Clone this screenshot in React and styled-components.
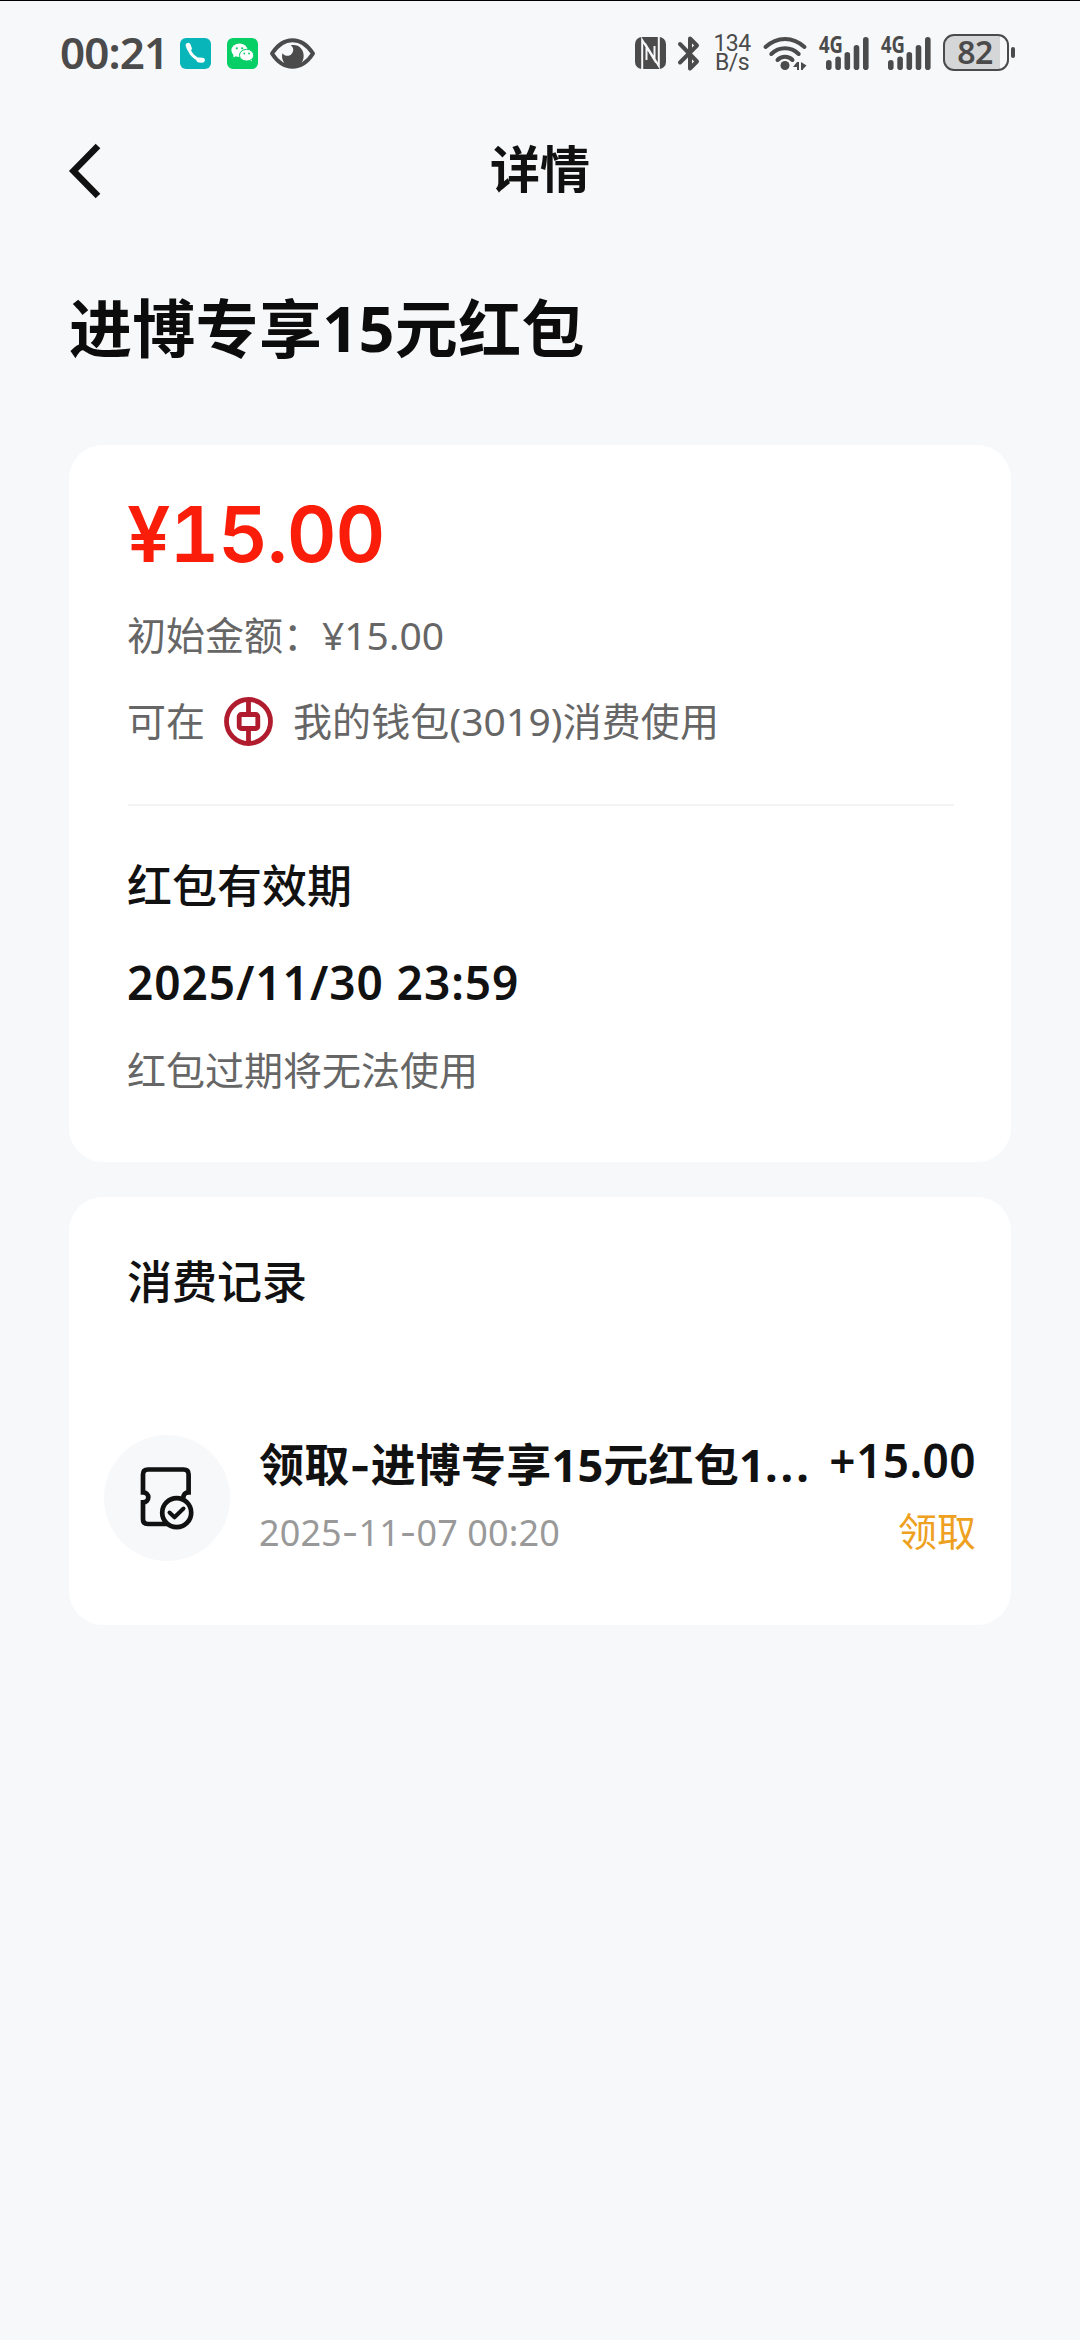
// libraries
import React from "react";
import { createGlobalStyle, styled } from "styled-components";

const GlobalStyle = createGlobalStyle`
  * {
    box-sizing: border-box;
  }

  body {
    margin: 0;
    background-color: #f7f8fa;
  }
`;

const Page = styled.div`
  width: 1080px;
  height: 2340px;
  display: flex;
  flex-direction: column;
  border-top: 1px solid #000;
  background-color: #f7f8fa;
  color: #111;
  font-family: "Noto Sans", "Noto Sans CJK SC", sans-serif;
  white-space: nowrap;
  overflow: hidden;
`;

const StatusBar = styled.div`
  height: 104px;
  padding: 0 65px 0 60px;
  display: flex;
  align-items: center;
  justify-content: space-between;
  color: #4b4b4b;
`;

const StatusGroup = styled.div`
  display: flex;
  align-items: center;
`;

const Icon = styled.svg`
  display: block;
  flex: none;
  margin-left: ${(props) => props.$gap || 0}px;
  overflow: visible;
`;

const Time = styled.div`
  width: 104px;
  margin-bottom: 3px;
  font-size: 44px;
  font-weight: 600;
  line-height: 60px;
  letter-spacing: -0.9px;
`;

const AppBadge = styled.div`
  width: 31px;
  height: 31px;
  margin-left: 16px;
  display: flex;
  align-items: center;
  justify-content: center;
  border-radius: 6px;
  background-color: ${(props) => props.$color};
`;

const Speed = styled.div`
  width: 38px;
  margin-left: 13px;
  font-family: Roboto, sans-serif;
  font-size: 23px;
  font-weight: 400;
  line-height: 19.5px;
  text-align: center;
  letter-spacing: -0.6px;
`;

const BatteryWrap = styled.div`
  margin-left: 12px;
  display: flex;
  align-items: center;
  gap: 2px;
`;

const BatteryBody = styled.div`
  width: 66px;
  height: 37px;
  margin-bottom: 2px;
  padding-right: 2px;
  border: 2.5px solid #4b4b4b;
  border-radius: 11px;
  background: linear-gradient(to right, #d5d6d7 88%, #f7f8fa 88%);
  font-size: 32px;
  font-weight: 600;
  line-height: 31px;
  text-align: center;
  letter-spacing: -0.6px;
`;

const BatteryCap = styled.div`
  width: 4px;
  height: 11px;
  margin-bottom: 2px;
  border-radius: 2px;
  background-color: #4b4b4b;
`;

const Nav = styled.div`
  height: 128px;
  padding: 0 69px;
  display: grid;
  grid-template-columns: 1fr auto 1fr;
  align-items: center;
`;

const NavTitle = styled.div`
  font-size: 50px;
  font-weight: 700;
  line-height: 60px;
`;

const Heading = styled.h1`
  margin: 53px 69px 75px;
  font-size: 63px;
  font-weight: 700;
  line-height: 84px;
  letter-spacing: 0.3px;
  color: #0c0c0c;
`;

const Card = styled.section`
  height: ${(props) => props.$height}px;
  margin: 0 69px 35px;
  padding-top: ${(props) => props.$top}px;
  border-radius: 34px;
  background-color: #fff;
`;

const CardBody = styled.div`
  padding: 0 57px 0 58px;
`;

const Amount = styled.div`
  font-family: Inter, "Noto Sans CJK SC", sans-serif;
  font-size: 77px;
  font-weight: 600;
  font-variant-numeric: tabular-nums;
  line-height: 90px;
  letter-spacing: -1px;
  color: #fa1e0a;
`;

const Info = styled.div`
  display: flex;
  align-items: center;
  margin-top: ${(props) => props.$top}px;
  font-size: 39px;
  line-height: 54px;
  height: 54px;
  color: #666;
`;

const Divider = styled.div`
  height: 2px;
  margin: 56px 0 50px 1px;
  background-color: #f3f3f4;
`;

const SectionTitle = styled.div`
  font-size: 45px;
  font-weight: 500;
  line-height: 60px;
`;

const Deadline = styled.div`
  margin-top: 36px;
  font-size: 46px;
  font-weight: 600;
  line-height: 60px;
  letter-spacing: 0.95px;
`;

const Record = styled.div`
  margin-top: 123px;
  padding: 0 35px;
  display: flex;
`;

const RecordIcon = styled.div`
  width: 126px;
  height: 126px;
  margin-right: 29px;
  padding: 32px 0 0 36px;
  border-radius: 50%;
  background-color: #f7f8fa;
`;

const RecordText = styled.div`
  flex: 1;
`;

const RecordTitle = styled.div`
  font-size: 45px;
  font-weight: 700;
  line-height: 60px;
  letter-spacing: 0.2px;
`;

// the hyphen of Inter is longer than that of Noto Sans
const Hyphen = styled.span`
  font-family: Inter, sans-serif;
  line-height: 1;
`;

const Dots = styled.span`
  letter-spacing: 3px;
`;

const RecordTime = styled.div`
  margin-top: 13px;
  font-size: 36px;
  line-height: 50px;
  letter-spacing: 0.1px;
  color: #999;
`;

const RecordRight = styled.div`
  margin-top: -5px;
  text-align: right;
`;

const RecordAmount = styled.div`
  font-size: 46px;
  font-weight: 600;
  line-height: 60px;
  letter-spacing: 0.4px;
`;

const RecordType = styled.div`
  margin-top: 14px;
  font-size: 39px;
  line-height: 54px;
  color: #eea020;
`;

const PhoneIcon = () => (
  <Icon width="21" height="21" viewBox="0 0 21 21">
    <path
      d="M3.5 2.5C3.5 9.5 9.6 16.6 17.6 17.4"
      fill="none"
      stroke="#fff"
      strokeWidth="3"
    />
    <path
      d="M3.2 2.4L4.3 5.4M14 17L17.4 17.2"
      stroke="#fff"
      strokeWidth="5"
      strokeLinecap="round"
    />
  </Icon>
);

const WechatIcon = () => (
  <Icon width="23" height="20" viewBox="0 0 23 20">
    <path d="M2 9.5L2.6 14.6L7 12Z" fill="#fff" />
    <ellipse cx="8.5" cy="7.2" rx="8.1" ry="6.8" fill="#fff" />
    <path d="M17 15L20.5 18.6L21 13Z" fill="#fff" />
    <ellipse
      cx="15.6"
      cy="12.2"
      rx="7.1"
      ry="5.9"
      fill="#fff"
      stroke="#07cf66"
      strokeWidth="1"
    />
    <g fill="#07cf66">
      <circle cx="5.8" cy="5.3" r="1.1" />
      <circle cx="11.2" cy="5.3" r="1.1" />
      <circle cx="13.3" cy="10.5" r="0.9" />
      <circle cx="18" cy="10.5" r="0.9" />
    </g>
  </Icon>
);

const EyeIcon = () => (
  <Icon $gap={12} width="45" height="31" viewBox="0 0 135 92">
    <path
      d="M6 46C22 21 42 6 67.5 6S113 21 129 46C113 71 93 86 67.5 86S22 71 6 46Z"
      fill="none"
      stroke="currentColor"
      strokeWidth="12"
      strokeLinejoin="round"
    />
    <path
      d="M62 22C84 16 101 32 101 53C101 74 86 87 68 87S36 73 36 53C36 50 37 47 38 45C44 55 59 56 66 46C72 37 71 27 62 22Z"
      fill="currentColor"
    />
  </Icon>
);

const NfcIcon = () => (
  <Icon width="31" height="32" viewBox="0 0 31 32">
    <rect width="31" height="32" rx="7" fill="currentColor" />
    <path
      d="M7.2 32V3L19.5 23V9M23.8 0V29L11.5 9V23"
      fill="none"
      stroke="#f7f8fa"
      strokeWidth="2"
    />
  </Icon>
);

const BluetoothIcon = () => (
  <Icon $gap={12} width="22" height="35" viewBox="0 0 22 35">
    <path
      d="M2 8L19 25.5L12 32.5V2.5L19 9.5L2 26.5"
      fill="none"
      stroke="currentColor"
      strokeWidth="4"
      strokeLinecap="round"
      strokeLinejoin="round"
    />
  </Icon>
);

const WifiIcon = () => (
  <Icon $gap={12} width="44" height="35" viewBox="0 0 44 35">
    <path
      d="M2.5 11C14 .2 30 .2 41.5 11M8.3 18C16 10.4 28 10.4 35.7 18M14.5 24C18.5 19.8 25.5 19.8 29.5 24"
      fill="none"
      stroke="currentColor"
      strokeWidth="4"
      strokeLinecap="round"
    />
    <circle cx="22" cy="29.5" r="4.5" fill="currentColor" />
    <path
      d="M30 31L34 26H36V34H34V31ZM38 26L43.5 29.5L40 33V34H38Z"
      fill="currentColor"
    />
  </Icon>
);

const BARS = [
  { x: 7, top: 23 },
  { x: 16.3, top: 19.5 },
  { x: 25.5, top: 15 },
  { x: 34.7, top: 8 },
  { x: 44, top: 0 },
];

const SignalIcon = ({ gap }) => (
  <Icon $gap={gap} width="50" height="33" viewBox="0 0 50 33">
    {BARS.map((bar) => (
      <rect
        key={bar.x}
        x={bar.x}
        y={bar.top}
        width="5.6"
        height={33 - bar.top}
        rx="2.8"
        fill="currentColor"
      />
    ))}
    <text
      x="0"
      y="16"
      textLength="24"
      lengthAdjust="spacingAndGlyphs"
      fontSize="22.5"
      fontWeight="700"
      fill="currentColor"
      stroke="#f7f8fa"
      strokeWidth="2"
      paintOrder="stroke"
    >
      4G
    </text>
  </Icon>
);

const BackArrow = styled(Icon)`
  margin-top: 4px;
`;

const BackIcon = () => (
  <BackArrow width="32" height="54" viewBox="0 0 32 54">
    <path
      d="M29 2L4.5 27L29 52"
      fill="none"
      stroke="#111"
      strokeWidth="6.5"
    />
  </BackArrow>
);

const BankIcon = () => (
  <Icon $gap={19} width="49" height="49" viewBox="0 0 49 49">
    <g fill="none" stroke="#b01c2e" strokeWidth="4.8">
      <circle cx="24.5" cy="24.5" r="22" />
      <rect x="15.2" y="17.5" width="18.6" height="14" rx="2" />
      <path d="M24.5 2V17.5M24.5 31.5V47" />
    </g>
  </Icon>
);

const CouponIcon = () => (
  <Icon width="55" height="63" viewBox="0 0 55 63">
    <g fill="none" stroke="#111" strokeWidth="4.7">
      <path d="M28 57H8Q3 57 3 52V35.3C6.4 35.3 8.3 33 8.3 30.3S6.4 25.3 3 25.3V7.5Q3 2.5 8 2.5H43.6Q48.6 2.5 48.6 7.5V25.3C45.2 25.3 43.3 27.6 43.3 31" />
      <circle cx="36.7" cy="45.7" r="14.5" />
      <path
        d="M29.5 45.5L34.5 50.3L43.5 41.5"
        strokeWidth="4"
        strokeLinecap="round"
        strokeLinejoin="round"
      />
    </g>
  </Icon>
);

const Wallet = styled.span`
  margin-left: 20px;
  letter-spacing: 0.1px;
`;

const App = () => {
  return (
    <Page>
      <GlobalStyle />

      <StatusBar>
        <StatusGroup>
          <Time>00:21</Time>
          <AppBadge $color="#08b5b8">
            <PhoneIcon />
          </AppBadge>
          <AppBadge $color="#07cf66">
            <WechatIcon />
          </AppBadge>
          <EyeIcon />
        </StatusGroup>

        <StatusGroup>
          <NfcIcon />
          <BluetoothIcon />
          <Speed>
            <div>134</div>
            <div>B/s</div>
          </Speed>
          <WifiIcon />
          <SignalIcon gap={12} />
          <SignalIcon gap={12} />
          <BatteryWrap>
            <BatteryBody>82</BatteryBody>
            <BatteryCap />
          </BatteryWrap>
        </StatusGroup>
      </StatusBar>

      <Nav>
        <BackIcon />
        <NavTitle>详情</NavTitle>
      </Nav>

      <Heading>进博专享15元红包</Heading>

      <Card $height={717} $top={44}>
        <CardBody>
          <Amount>¥15.00</Amount>
          <Info $top={29}>初始金额：¥15.00</Info>
          <Info $top={32}>
            <span>可在</span>
            <BankIcon />
            <Wallet>我的钱包(3019)消费使用</Wallet>
          </Info>
          <Divider />
          <SectionTitle>红包有效期</SectionTitle>
          <Deadline>2025/11/30 23:59</Deadline>
          <Info $top={31}>红包过期将无法使用</Info>
        </CardBody>
      </Card>

      <Card $height={428} $top={55}>
        <CardBody>
          <SectionTitle>消费记录</SectionTitle>
        </CardBody>
        <Record>
          <RecordIcon>
            <CouponIcon />
          </RecordIcon>
          <RecordText>
            <RecordTitle>
              领取<Hyphen>-</Hyphen>进博专享15元红包1<Dots>...</Dots>
            </RecordTitle>
            <RecordTime>
              2025<Hyphen>-</Hyphen>11<Hyphen>-</Hyphen>07 00:20
            </RecordTime>
          </RecordText>
          <RecordRight>
            <RecordAmount>+15.00</RecordAmount>
            <RecordType>领取</RecordType>
          </RecordRight>
        </Record>
      </Card>
    </Page>
  );
};

export default App;
